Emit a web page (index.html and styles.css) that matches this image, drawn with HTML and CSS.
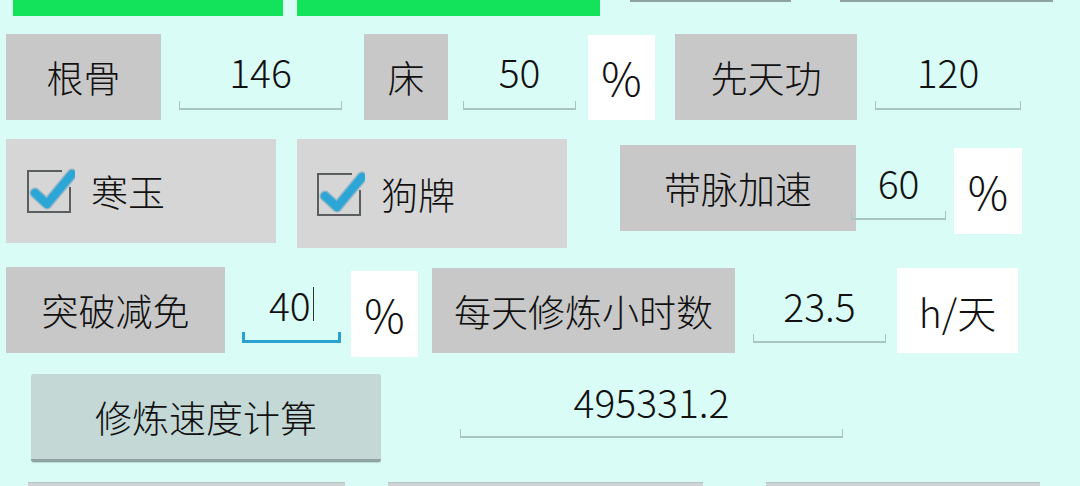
FILE: index.html
```html
<!DOCTYPE html>
<html lang="zh-CN">
<head>
    <meta charset="UTF-8">
    <title>修炼速度计算</title>
    <link rel="stylesheet" href="styles.css">
</head>
<body>

<div class="screen">
    <!-- 上一行的残留部分 -->
    <div class="row top">
        <div class="green g1"></div>
        <div class="green g2"></div>
        <div class="edge e1"></div>
        <div class="edge e2"></div>
    </div>

    <div class="row r1">
        <div class="lab w155 ml6">根骨</div>
        <div class="inp w163 ml18"><span class="val">146</span><i class="line"></i></div>
        <div class="lab w84 ml22">床</div>
        <div class="inp w113 ml15"><span class="val">50</span><i class="line"></i></div>
        <div class="unit pct w67 ml12 pct1">%</div>
        <div class="lab w182 ml20">先天功</div>
        <div class="inp w146 ml18"><span class="val">120</span><i class="line"></i></div>
    </div>

    <div class="row r2">
        <div class="chk ml6 hanyu">
            <svg class="box" width="50" height="50" viewBox="0 0 50 50">
                <path d="M37 6 H3 V47 H45 V22" fill="none" stroke="#5b5e5e" stroke-width="2"/>
                <path d="M10 28 L22 39 L47 9" fill="none" stroke="#1d7ea6" stroke-width="11" stroke-linecap="round" stroke-linejoin="round" opacity="0.35"/>
                <path d="M10 28 L22 39 L47 9" fill="none" stroke="#2ba6d6" stroke-width="8" stroke-linecap="round" stroke-linejoin="round"/>
            </svg>
            <span>寒玉</span>
        </div>
        <div class="chk ml21 goupai">
            <svg class="box" width="50" height="50" viewBox="0 0 50 50">
                <path d="M37 6 H3 V47 H45 V22" fill="none" stroke="#5b5e5e" stroke-width="2"/>
                <path d="M10 28 L22 39 L47 9" fill="none" stroke="#1d7ea6" stroke-width="11" stroke-linecap="round" stroke-linejoin="round" opacity="0.35"/>
                <path d="M10 28 L22 39 L47 9" fill="none" stroke="#2ba6d6" stroke-width="8" stroke-linecap="round" stroke-linejoin="round"/>
            </svg>
            <span>狗牌</span>
        </div>
        <div class="lab w236 ml53 mt6">带脉加速</div>
        <div class="inp w95 mlm5 mt6 lo12"><span class="val">60</span><i class="line"></i></div>
        <div class="unit pct w68 ml8 mt9">%</div>
    </div>

    <div class="row r3">
        <div class="lab w219 ml6">突破减免</div>
        <div class="inp w99 ml17 focus"><span class="val">40<b class="cursor"></b></span><i class="line"></i></div>
        <div class="unit pct w67 ml10 mt4">%</div>
        <div class="lab w303 ml14 mt1 h85">每天修炼小时数</div>
        <div class="inp w133 ml18 mt1 h85"><span class="val">23.5</span><i class="line"></i></div>
        <div class="unit w121 ml11 mt1 h85">h/天</div>
    </div>

    <div class="row r4">
        <div class="btn">修炼速度计算</div>
        <div class="inp result"><span class="val">495331.2</span><i class="line"></i></div>
    </div>

    <div class="row r5">
        <div class="peek p1"></div>
        <div class="peek p2"></div>
        <div class="peek p3"></div>
    </div>
</div>

</body>
</html>
```

FILE: styles.css
```css
*{
    margin:0;
    padding:0;
    box-sizing:border-box;
}

html,body {
    width:1080px;
    height:486px;
    overflow:hidden;
    background:#d9fcf7;
}
body {
    font-family:"Noto Sans CJK SC","Noto Sans",sans-serif;
    font-size:37px;
    font-weight:300;
    color:#111;
}

.row {
    display:flex;
    align-items:flex-start;
}

/* 顶部残留 */
.top {
    height:16px;
}
.green {
    height:16px;
    background:#13e35b;
}
.g1 { margin-left:13px; width:270px; }
.g2 { margin-left:14px; width:303px; }
.edge {
    height:2px;
    background:#8ea2a1;
}
.e1 { margin-left:30px; width:161px; }
.e2 { margin-left:49px; width:213px; }

/* 各行 */
.r1 { margin-top:18px; height:86px; }
.r2 { margin-top:19px; height:109px; }
.r3 { margin-top:19px; height:90px; }
.r4 { margin-top:17px; height:88px; }
.r5 { margin-top:20px; }

/* 标签 */
.lab {
    height:86px;
    background:#c8c8c8;
    display:flex;
    align-items:center;
    justify-content:center;
    white-space:nowrap;
}

/* 数字 */
.inp .val,
.unit {
    font-size:39px;
}

/* 输入框 */
.inp {
    height:86px;
    display:flex;
    flex-direction:column;
    align-items:center;
}
.inp .val {
    display:flex;
    align-items:center;
    height:50px;
    margin-top:12px;
    line-height:50px;
}
.inp .line {
    display:block;
    width:100%;
    height:9px;
    margin-top:auto;
    margin-bottom:10px;
    border:solid #a9c5c2;
    border-width:0 1.5px 2px 1.5px;
}
.inp.lo12 .line { margin-bottom:11px; }
.inp.focus .line {
    border-color:#2aa2cf;
    border-width:0 3px 3px 3px;
    height:11px;
}
.cursor {
    display:inline-block;
    width:1.5px;
    height:34px;
    margin-left:2px;
    background:#333;
}

/* 单位 */
.unit {
    height:86px;
    background:#fff;
    display:flex;
    align-items:center;
    justify-content:center;
    white-space:nowrap;
}
.unit.pct {
    font-size:45px;
    padding-bottom:2px;
}
.pct1 { height:85px; margin-top:1px; }

/* 勾选框 */
.chk {
    width:270px;
    background:#d6d6d6;
    display:flex;
    align-items:center;
}
.chk .box {
    flex:none;
    margin-left:19px;
    margin-right:16px;
    margin-top:-3px;
}
.hanyu { height:104px; }
.goupai { height:109px; }
.goupai .box { margin-left:18px; margin-top:-2px; }

/* 按钮 */
.btn {
    margin-left:31px;
    width:350px;
    height:88px;
    background:#c4d8d6;
    border-radius:3px;
    border-bottom:3px solid #8fa3a1;
    box-shadow:0 1px 1px rgba(0,0,0,0.15);
    display:flex;
    align-items:center;
    justify-content:center;
    padding-top:1px;
}
.result {
    margin-left:79px;
    width:383px;
    height:74px;
}
.result .val { margin-top:2px; }

/* 底部下一行 */
.peek {
    height:8px;
    background:#cdd5d4;
    border-top:1px solid #b7c4c3;
}
.p1 { margin-left:28px; width:317px; }
.p2 { margin-left:43px; width:315px; }
.p3 { margin-left:63px; width:274px; }

/* 尺寸 */
.w67 { width:67px; }
.w68 { width:68px; }
.w84 { width:84px; }
.w95 { width:95px; }
.w99 { width:99px; }
.w113 { width:113px; }
.w121 { width:121px; }
.w133 { width:133px; }
.w146 { width:146px; }
.w155 { width:155px; }
.w163 { width:163px; }
.w182 { width:182px; }
.w219 { width:219px; }
.w236 { width:236px; }
.w303 { width:303px; }
.h85 { height:85px; }

.ml6 { margin-left:6px; }
.ml8 { margin-left:8px; }
.ml10 { margin-left:10px; }
.ml11 { margin-left:11px; }
.ml12 { margin-left:12px; }
.ml14 { margin-left:14px; }
.ml15 { margin-left:15px; }
.ml17 { margin-left:17px; }
.ml18 { margin-left:18px; }
.ml20 { margin-left:20px; }
.ml21 { margin-left:21px; }
.ml22 { margin-left:22px; }
.ml53 { margin-left:53px; }
.mlm5 { margin-left:-5px; }
.mt1 { margin-top:1px; }
.mt4 { margin-top:4px; }
.mt6 { margin-top:6px; }
.mt9 { margin-top:9px; }
```
